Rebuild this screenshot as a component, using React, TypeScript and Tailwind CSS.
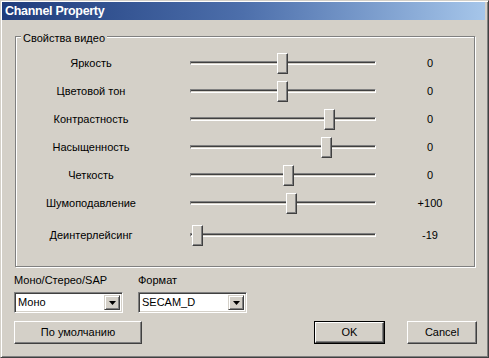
import React from "react";

const rows = [
  { label: "Яркость", pos: 87, value: "0" },
  { label: "Цветовой тон", pos: 87, value: "0" },
  { label: "Контрастность", pos: 134, value: "0" },
  { label: "Насыщенность", pos: 131, value: "0" },
  { label: "Четкость", pos: 93, value: "0" },
  { label: "Шумоподавление", pos: 96, value: "+100" },
  { label: "Деинтерлейсинг", pos: 2, value: "-19" },
];

const Slider = ({ pos }: { pos: number }) => (
  <div className="relative w-[186px] h-[21px]">
    <div className="absolute left-0 right-0 top-[8px] h-[4px] border-t border-l border-t-[#808080] border-l-[#808080] border-b border-r border-b-white border-r-white bg-[#d4d0c8] shadow-[inset_0_1px_0_#404040]" />
    {/* thumb sits on top of the channel */}
    <div
      className="absolute top-0 w-[11px] h-[21px] bg-[#d4d0c8] border-t border-l border-t-white border-l-white border-r border-b border-r-[#404040] border-b-[#404040] shadow-[inset_-1px_-1px_0_#808080]"
      style={{ left: pos }}
    />
  </div>
);

const Combo = ({ text }: { text: string }) => (
  <div className="w-[109px] h-[21px] flex items-center bg-white border-t border-l border-t-[#808080] border-l-[#808080] border-b border-r border-b-white border-r-white shadow-[inset_1px_1px_0_#404040,inset_-1px_-1px_0_#d4d0c8] pl-[3px] pr-[2px]">
    <span className="flex-1 leading-none">{text}</span>
    <div className="w-[16px] h-[15px] flex items-center justify-center bg-[#d4d0c8] border-t border-l border-t-[#d4d0c8] border-l-[#d4d0c8] border-b border-r border-b-[#404040] border-r-[#404040] shadow-[inset_1px_1px_0_#fff,inset_-1px_-1px_0_#808080]">
      <svg width="7" height="4" viewBox="0 0 7 4">
        <path d="M0 0h7L3.5 4z" fill="#000" />
      </svg>
    </div>
  </div>
);

const Button = ({
  text,
  width,
  primary,
}: {
  text: string;
  width: string;
  primary?: boolean;
}) => (
  <div
    className={
      primary
        ? `${width} h-[23px] border border-black`
        : `${width} h-[23px]`
    }
  >
    <div className="w-full h-full flex items-center justify-center bg-[#d4d0c8] border-t border-l border-t-white border-l-white border-b border-r border-b-[#404040] border-r-[#404040] shadow-[inset_-1px_-1px_0_#808080]">
      {text}
    </div>
  </div>
);

export default function App() {
  return (
    <div
      className="w-[489px] h-[358px] bg-[#d4d0c8] text-black text-[11px] border border-t-[#d4d0c8] border-l-[#d4d0c8] border-r-[#404040] border-b-[#404040] shadow-[inset_1px_1px_0_#fff,inset_-1px_-1px_0_#808080] overflow-hidden"
      style={{ fontFamily: '"Liberation Sans", Arial, sans-serif' }}
    >
      <div className="ml-[1px] mt-[1px] w-[483px] h-[18px] flex items-center pl-[3px] bg-gradient-to-r from-[#1f3c7c] via-[#4d6fab] to-[#a6c6ea]">
        <span className="text-white font-bold text-[12.5px] tracking-[-0.3px]">
          Channel Property
        </span>
      </div>

      <div className="relative ml-[14px] mt-[16px] w-[460px] h-[231px] border border-[#808080] shadow-[inset_1px_1px_0_#fff,1px_1px_0_#fff] pt-[12px]">
        <span className="absolute left-[5px] top-[-6px] px-[2px] bg-[#d4d0c8] leading-[14px]">
          Свойства видео
        </span>
        {rows.map((r, i) => (
          <div
            key={r.label}
            className={i === 6 ? "flex items-center h-[28px] mt-[4px]" : "flex items-center h-[28px]"}
          >
            <div className="ml-[4px] w-[142px] text-center">{r.label}</div>
            <div className="ml-[28px]">
              <Slider pos={r.pos} />
            </div>
            <div className="ml-[24px] w-[60px] text-center">{r.value}</div>
          </div>
        ))}
      </div>

      <div className="flex ml-[13px] mt-[6px] gap-[15px] leading-[14px]">
        <div className="w-[109px]">Моно/Стерео/SAP</div>
        <div className="w-[109px]">Формат</div>
      </div>
      <div className="flex ml-[13px] mt-[5px] gap-[15px]">
        <Combo text="Моно" />
        <Combo text="SECAM_D" />
      </div>

      <div className="flex ml-[13px] mt-[8px]">
        <Button text="По умолчанию" width="w-[128px]" />
        <div className="ml-[172px]">
          <Button text="OK" width="w-[71px]" primary />
        </div>
        <div className="ml-[22px]">
          <Button text="Cancel" width="w-[70px]" />
        </div>
      </div>
    </div>
  );
}
